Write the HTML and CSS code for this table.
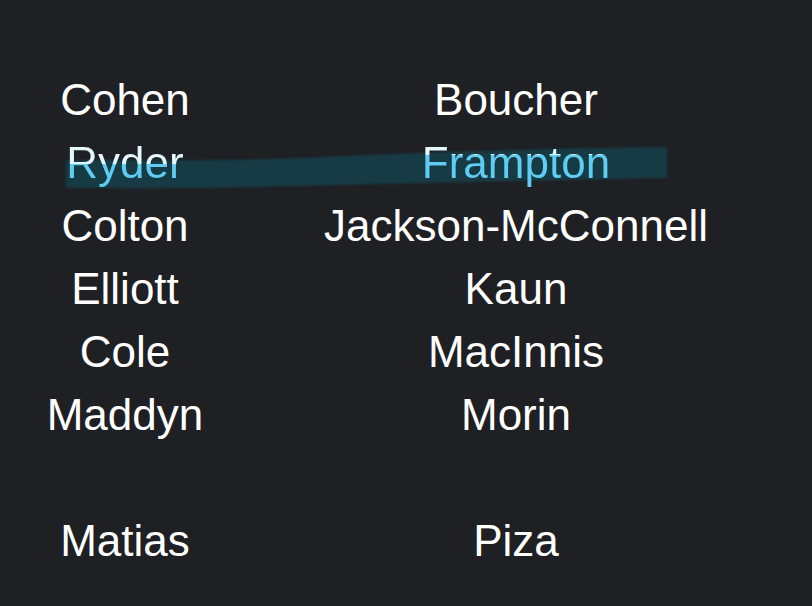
FILE: index.html
```html
<!DOCTYPE html>
<html>
<head>
<meta charset="utf-8">
<link rel="stylesheet" href="styles.css">
</head>
<body>
<div class="sheet">
  <svg class="highlight" width="812" height="606" viewBox="0 0 812 606" aria-hidden="true">
    <defs>
      <filter id="soft" x="-5%" y="-50%" width="110%" height="200%">
        <feGaussianBlur stdDeviation="1.2"/>
      </filter>
    </defs>
    <path d="M66 160 C 150 160, 220 161, 300 158 C 420 152, 560 148, 667 147 L 667 178 C 560 180, 420 183, 300 186 C 220 188, 150 189, 66 188 Z" fill="#183a45" filter="url(#soft)"/>
  </svg>
  <div class="names">
    <div class="cell">Cohen</div><div class="cell">Boucher</div>
    <div class="cell"><span class="hl hl-left">Ryder</span></div><div class="cell"><span class="hl hl-right">Frampton</span></div>
    <div class="cell">Colton</div><div class="cell">Jackson-McConnell</div>
    <div class="cell">Elliott</div><div class="cell">Kaun</div>
    <div class="cell">Cole</div><div class="cell">MacInnis</div>
    <div class="cell">Maddyn</div><div class="cell">Morin</div>
    <div class="cell"></div><div class="cell"></div>
    <div class="cell">Matias</div><div class="cell">Piza</div>
  </div>
</div>
</body>
</html>
```
FILE: styles.css
```css
html, body {
  margin: 0;
  padding: 0;
  background: #1f2024;
}
body {
  width: 812px;
  height: 606px;
  overflow: hidden;
  font-family: "Liberation Sans", Arial, sans-serif;
}
.sheet {
  position: relative;
  width: 812px;
  height: 606px;
}
.highlight {
  position: absolute;
  left: 0;
  top: 0;
  z-index: 0;
}
.names {
  position: relative;
  z-index: 1;
  display: grid;
  grid-template-columns: 250px 532px;
  grid-auto-rows: 63px;
  padding-top: 68px;
  color: #ffffff;
  font-size: 44px;
  line-height: 63px;
}
.cell {
  text-align: center;
  white-space: nowrap;
}
.hl {
  -webkit-background-clip: text;
  background-clip: text;
  color: transparent;
  -webkit-text-fill-color: transparent;
}
.hl-left {
  background-image: linear-gradient(to bottom, #e4f7fd 0, #e4f7fd 26px, #5fcdf2 26px, #5fcdf2 100%);
}
.hl-right {
  background-image: linear-gradient(to bottom, #e4f7fd 0, #e4f7fd 17px, #5fcdf2 17px, #5fcdf2 100%);
}
```
